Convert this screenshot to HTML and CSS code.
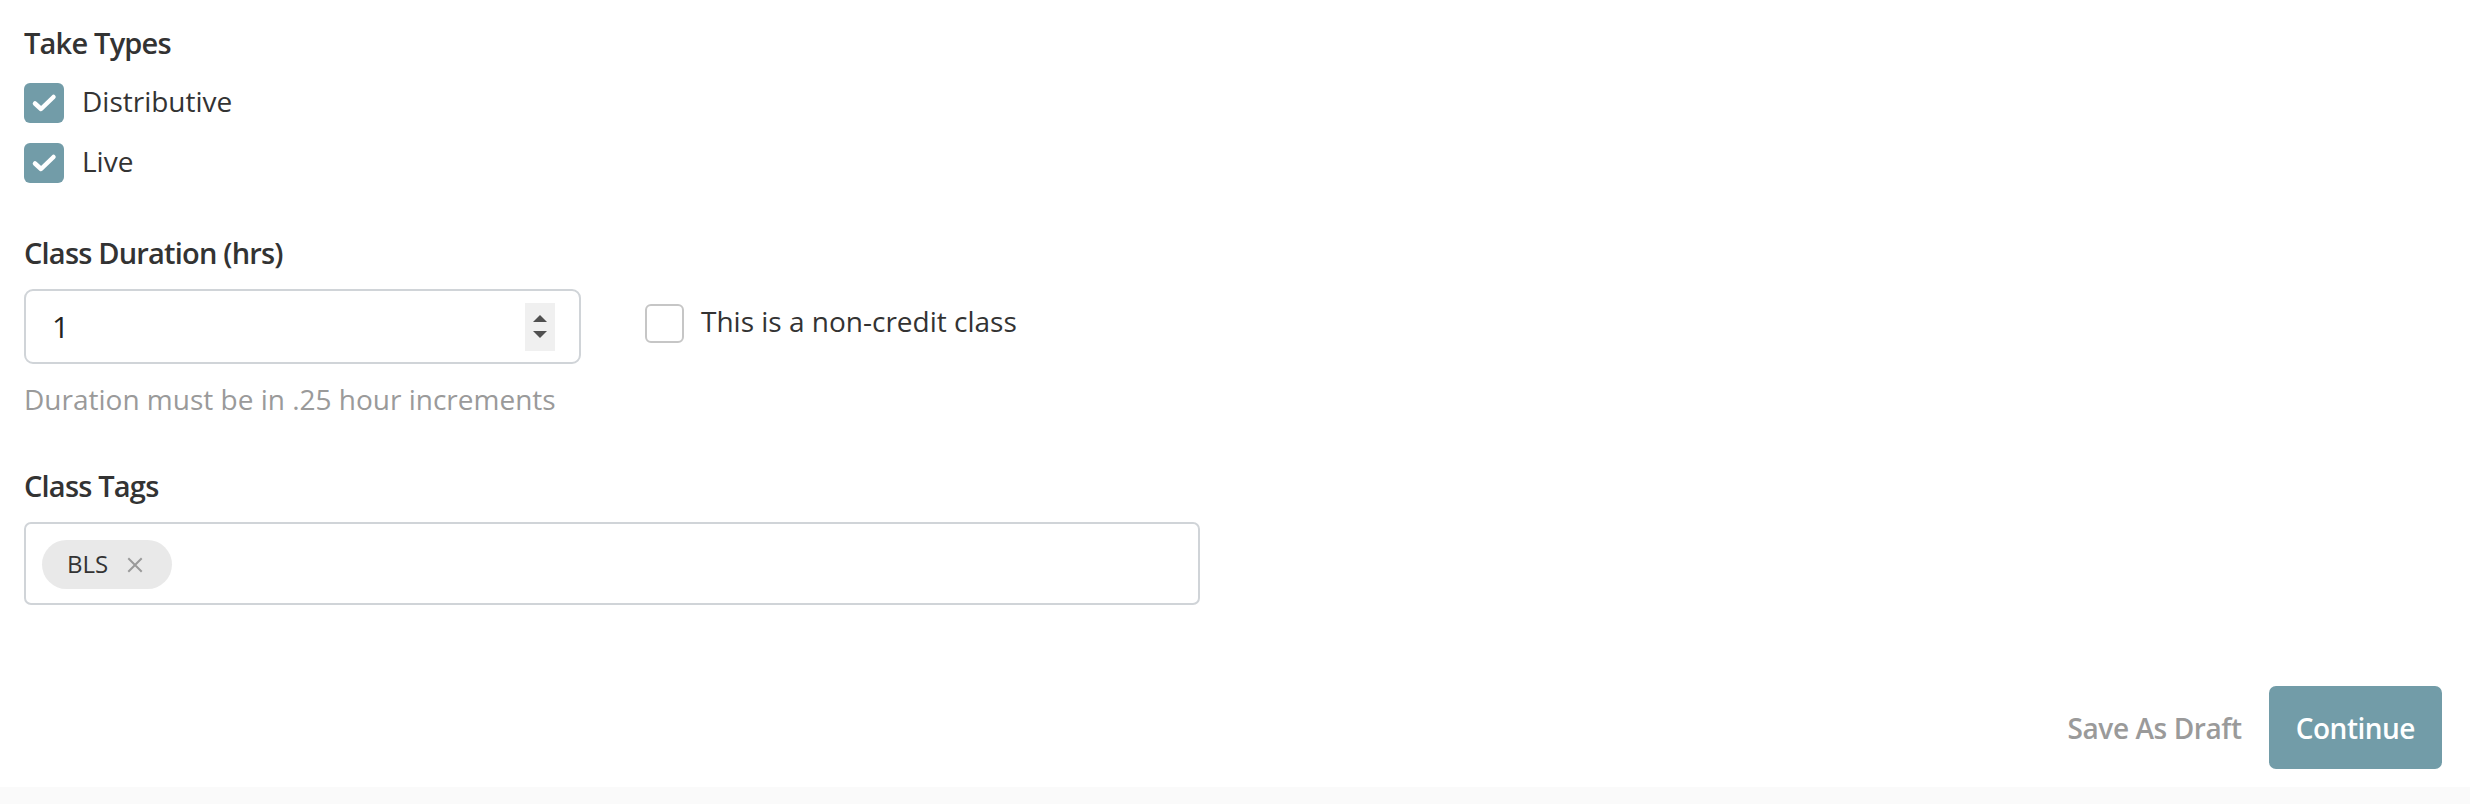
FILE: index.html
```html
<!DOCTYPE html>
<html>
<head>
<meta charset="utf-8">
<link rel="stylesheet" href="styles.css">
</head>
<body>
<div class="page">
  <form class="form">
    <div class="label label-first">Take Types</div>
    <div class="check-list">
      <label class="check-row">
        <span class="box checked"><svg viewBox="0 0 40 40" width="40" height="40"><path d="M11 20.5 L17 26 L29.5 14" fill="none" stroke="#fff" stroke-width="4.5" stroke-linecap="round" stroke-linejoin="round"/></svg></span>
        <span class="check-text">Distributive</span>
      </label>
      <label class="check-row">
        <span class="box checked"><svg viewBox="0 0 40 40" width="40" height="40"><path d="M11 20.5 L17 26 L29.5 14" fill="none" stroke="#fff" stroke-width="4.5" stroke-linecap="round" stroke-linejoin="round"/></svg></span>
        <span class="check-text">Live</span>
      </label>
    </div>

    <div class="label label-duration">Class Duration (hrs)</div>
    <div class="duration-row">
      <div class="num-input">
        <span class="num-value">1</span>
        <span class="spinner">
          <span class="tri up"></span>
          <span class="tri down"></span>
        </span>
      </div>
      <label class="check-row noncredit">
        <span class="box empty"></span>
        <span class="check-text">This is a non-credit class</span>
      </label>
    </div>
    <div class="help">Duration must be in .25 hour increments</div>

    <div class="label label-tags">Class Tags</div>
    <div class="tags-input">
      <span class="chip"><span class="chip-text">BLS</span><svg class="chip-x" viewBox="0 0 16 16" width="16" height="16"><path d="M2 2 L14 14 M14 2 L2 14" stroke="#9a9a9a" stroke-width="2" stroke-linecap="square" fill="none"/></svg></span>
    </div>

    <div class="footer">
      <span class="draft">Save As Draft</span>
      <span class="btn-continue">Continue</span>
    </div>
  </form>
</div>
</body>
</html>
```

FILE: styles.css
```css
html, body {
  margin: 0;
  padding: 0;
}
body {
  background: #fafafa;
  font-family: "Open Sans", "Liberation Sans", sans-serif;
  color: #333333;
}
.page {
  background: #ffffff;
  padding: 0 28px 18px 24px;
}
.form {
  display: flex;
  flex-direction: column;
  align-items: flex-start;
}
.label {
  font-size: 29px;
  font-weight: 600;
  letter-spacing: -0.8px;
  line-height: 42px;
  color: #333333;
}
.label-first {
  margin-top: 22px;
}
.check-list {
  margin-top: 19px;
  display: flex;
  flex-direction: column;
  gap: 20px;
}
.check-row {
  display: flex;
  align-items: center;
  gap: 18px;
  height: 40px;
}
.box {
  width: 40px;
  height: 40px;
  box-sizing: border-box;
  border-radius: 6px;
  display: flex;
  align-items: center;
  justify-content: center;
  flex: none;
}
.box.checked {
  background: #729ca8;
}
.box.empty {
  border: 2px solid #c6c6c6;
  background: #ffffff;
  width: 39px;
  height: 39px;
}
.check-text {
  font-size: 28px;
  line-height: 40px;
  padding-bottom: 5px;
  color: #333333;
}
.label-duration {
  margin-top: 49px;
}
.duration-row {
  margin-top: 15px;
  display: flex;
  align-items: center;
  gap: 64px;
}
.num-input {
  width: 557px;
  height: 75px;
  box-sizing: border-box;
  border: 2px solid #d0d4d8;
  border-radius: 9px;
  display: flex;
  align-items: center;
  justify-content: space-between;
  padding: 0 24px 0 26px;
}
.num-value {
  font-size: 30px;
  color: #222222;
}
.spinner {
  width: 30px;
  height: 48px;
  background: #f0f0f0;
  display: flex;
  flex-direction: column;
  align-items: center;
  justify-content: center;
  gap: 9px;
}
.tri {
  width: 0;
  height: 0;
  border-left: 7px solid transparent;
  border-right: 7px solid transparent;
}
.tri.up {
  border-bottom: 7px solid #505050;
}
.tri.down {
  border-top: 7px solid #505050;
}
.noncredit {
  margin-top: -7px;
  gap: 17px;
}
.help {
  margin-top: 16px;
  font-size: 28px;
  line-height: 38px;
  color: #9a9a9a;
}
.label-tags {
  margin-top: 47px;
}
.tags-input {
  margin-top: 15px;
  width: 1176px;
  height: 83px;
  box-sizing: border-box;
  border: 2px solid #d0d4d8;
  border-radius: 7px;
  display: flex;
  align-items: center;
  padding: 0 16px;
}
.chip {
  height: 49px;
  box-sizing: border-box;
  padding: 0 29px 0 25px;
  border-radius: 25px;
  background: #e9e9e9;
  display: flex;
  align-items: center;
  gap: 19px;
  margin-top: 2px;
}
.chip-text {
  font-size: 24px;
  color: #333333;
  padding-bottom: 2px;
}
.chip-x {
  display: block;
  flex: none;
}
.footer {
  align-self: stretch;
  margin-top: 81px;
  display: flex;
  justify-content: flex-end;
  align-items: center;
  gap: 27px;
}
.draft {
  font-size: 28px;
  font-weight: 600;
  letter-spacing: -0.4px;
  color: #9a9a9a;
}
.btn-continue {
  height: 83px;
  box-sizing: border-box;
  padding: 0 27px;
  display: flex;
  align-items: center;
  background: #729ca8;
  color: #ffffff;
  border-radius: 7px;
  font-size: 28px;
  font-weight: 600;
  letter-spacing: -0.5px;
}
```
